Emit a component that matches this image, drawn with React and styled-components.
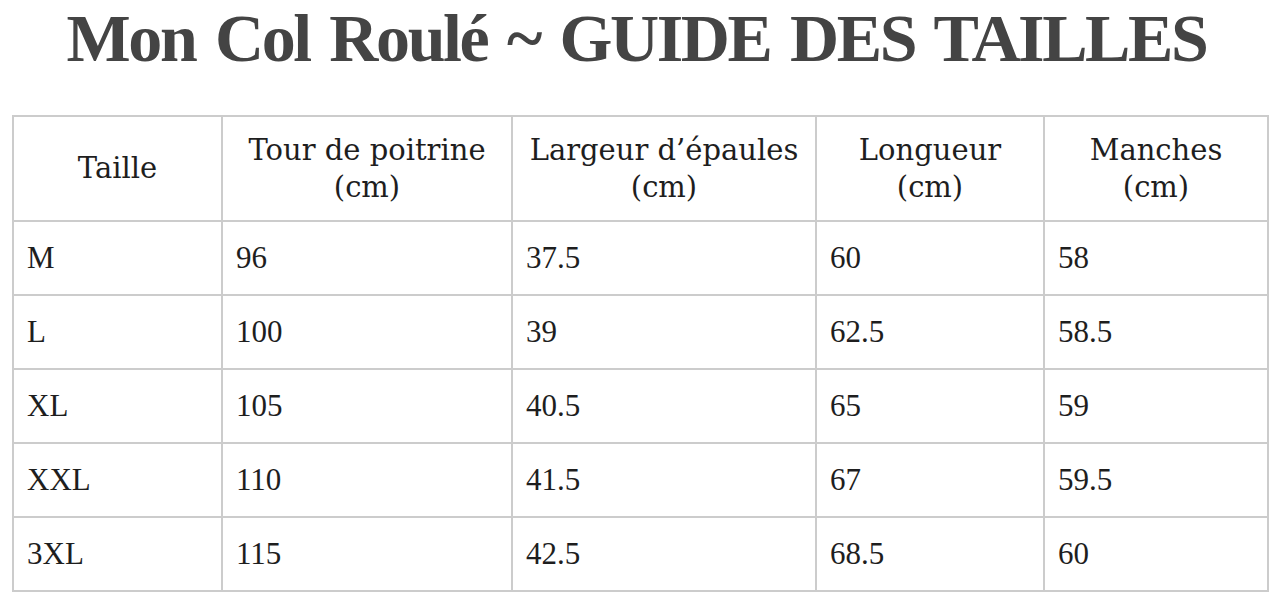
import React from "react";
import styled, { createGlobalStyle } from "styled-components";

const GlobalStyle = createGlobalStyle`
  html, body {
    margin: 0;
    padding: 0;
    background: #ffffff;
  }
`;

const columns = [
  { label: "Taille", unit: false, width: 209 },
  { label: "Tour de poitrine", unit: true, width: 290 },
  { label: "Largeur d’épaules", unit: true, width: 304 },
  { label: "Longueur", unit: true, width: 228 },
  { label: "Manches", unit: true, width: 224 },
];

const rows = [
  ["M", "96", "37.5", "60", "58"],
  ["L", "100", "39", "62.5", "58.5"],
  ["XL", "105", "40.5", "65", "59"],
  ["XXL", "110", "41.5", "67", "59.5"],
  ["3XL", "115", "42.5", "68.5", "60"],
];

const App = () => {
  return (
    <Page>
      <GlobalStyle />
      <Title>Mon Col Roulé ~ GUIDE DES TAILLES</Title>
      <SizeTable>
        <colgroup>
          {columns.map((col) => (
            <col key={col.label} style={{ width: col.width }} />
          ))}
        </colgroup>
        <thead>
          <tr>
            {columns.map((col) => (
              <HeadCell key={col.label}>
                {col.label}
                {col.unit && (
                  <>
                    <br />
                    (cm)
                  </>
                )}
              </HeadCell>
            ))}
          </tr>
        </thead>
        <tbody>
          {rows.map((row) => (
            <tr key={row[0]}>
              {row.map((value, index) => (
                <Cell key={index}>{value}</Cell>
              ))}
            </tr>
          ))}
        </tbody>
      </SizeTable>
    </Page>
  );
};

export default App;

const Page = styled.div`
  width: 1281px;
  height: 601px;
  padding: 3px 12px 0 12px;
  box-sizing: border-box;
  display: flex;
  flex-direction: column;
  align-items: center;
  font-family: "Liberation Serif", "DejaVu Serif", serif;
`;

const Title = styled.h1`
  margin: 0 0 0 -8px;
  font-size: 68px;
  line-height: 70px;
  font-weight: 700;
  letter-spacing: -2.4px;
  word-spacing: 5px;
  color: #444444;
  white-space: nowrap;
`;

const SizeTable = styled.table`
  margin-top: 42px;
  width: 1255px;
  table-layout: fixed;
  border-collapse: collapse;
  border: 2px solid #cccccc;
  color: #1e1e1e;
  font-size: 31px;
`;

const HeadCell = styled.th`
  height: 105px;
  box-sizing: border-box;
  padding: 12px 10px;
  border: 2px solid #cccccc;
  font-family: "DejaVu Serif", "Liberation Serif", serif;
  font-size: 29px;
  font-weight: 400;
  line-height: 37px;
  text-align: center;
  vertical-align: middle;
`;

const Cell = styled.td`
  height: 74px;
  box-sizing: border-box;
  padding: 0 13px;
  border: 2px solid #cccccc;
  text-align: left;
  vertical-align: middle;
  line-height: 36px;
`;
